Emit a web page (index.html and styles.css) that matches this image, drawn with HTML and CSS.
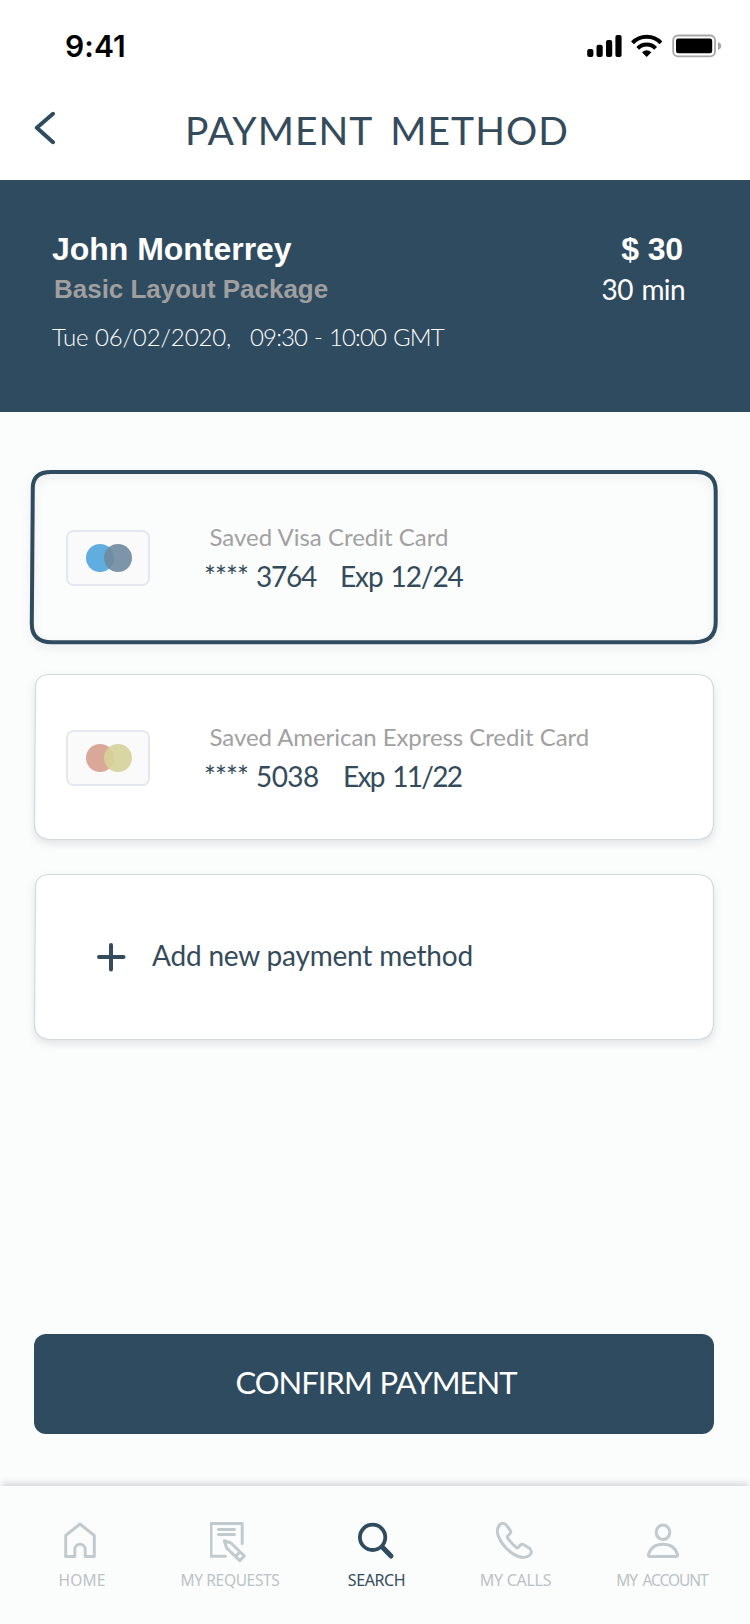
FILE: index.html
```
<!DOCTYPE html>
<html lang="en">
<head>
<meta charset="utf-8">
<title>Payment Method</title>
<link rel="stylesheet" href="styles.css">
</head>
<body>
<div class="screen">
  <div class="status">
    <span class="clock">9:41</span>
    <svg class="status-icons" width="136" height="26" viewBox="586 33 136 26">
      <rect x="587.2" y="49" width="6.2" height="8" rx="2"/>
      <rect x="596.5" y="44.7" width="6.2" height="12.3" rx="2"/>
      <rect x="606" y="40" width="6.2" height="17" rx="2"/>
      <rect x="615.4" y="35" width="6.2" height="22" rx="2"/>
      <g fill="none" stroke="#000" stroke-width="4">
        <path d="M632.5 42.8A19.6 19.6 0 0 1 660.9 42.8"/>
        <path d="M637.8 48.3A12.2 12.2 0 0 1 655.6 48.3"/>
      </g>
      <path d="M642 52.2Q646.7 48.2 651.4 52.2L646.7 56.9Z"/>
      <rect x="673.2" y="35.5" width="41.8" height="20.8" rx="4.8" fill="none" stroke="#a6a6a6" stroke-width="1.8"/>
      <rect x="676" y="38.6" width="36.2" height="14.6" rx="2.2"/>
      <path d="M718 42.2Q721.2 43 721.2 46T718 49.8Z" fill="#a6a6a6"/>
    </svg>
  </div>
  <header class="titlebar">
    <svg class="back" width="24" height="34" viewBox="33 111 24 34"><path d="M53 113.8L36.800 127.700L53 142.200"/></svg>
    <h1 class="title">PAYMENT METHOD</h1>
  </header>
  <section class="summary">
    <div>
      <div class="name">John Monterrey</div>
      <div class="package">Basic Layout Package</div>
      <div class="date"><span class="day">Tue 06/02/2020,</span><span class="hours">09:30 - 10:00 GMT</span></div>
    </div>
    <div class="cost">
      <div class="price">$ 30</div>
      <div class="length">30 min</div>
    </div>
  </section>
  <main class="methods">
    <div class="card">
      <svg class="frame selected" viewBox="0 0 680 166"><path d="M17-2H662Q681.700-2 681.700 17V148Q681.700 168.200 660 168.200H18Q-2.200 168.200-2.200 150L-1.200 14Q-1.200-2 17-2Z"/></svg>
      <svg class="chip" width="84" height="56" viewBox="0 0 84 56">
        <rect class="chip-box" x="1" y="1" width="82" height="54" rx="6.500"/>
        <circle cx="34" cy="28" r="14" fill="#60aee0"/><circle cx="52" cy="28" r="14" fill="#6f8a9f" fill-opacity=".9"/>
      </svg>
      <div class="info">
        <div class="label">Saved Visa Credit Card</div>
        <div class="number"><span class="stars">****</span><span class="digits visa">3764</span><span class="exp">Exp 12/24</span></div>
      </div>
    </div>
    <div class="card">
      <svg class="frame" viewBox="0 0 680 166"><path d="M16 .5H662Q679.500.5 679.500 16V148Q679.500 165.500 662 165.500H18Q.5 165.500.5 150L1.500 14Q1.500.5 16 .5Z"/></svg>
      <svg class="chip" width="84" height="56" viewBox="0 0 84 56">
        <rect class="chip-box" x="1" y="1" width="82" height="54" rx="6.500"/>
        <circle cx="34" cy="28" r="14" fill="#daa899"/><circle cx="52" cy="28" r="14" fill="#d6d299" fill-opacity=".9"/>
      </svg>
      <div class="info">
        <div class="label amex-label">Saved American Express Credit Card</div>
        <div class="number"><span class="stars">****</span><span class="digits amex">5038</span><span class="exp amex-exp">Exp 11/22</span></div>
      </div>
    </div>
    <div class="card add">
      <svg class="frame" viewBox="0 0 680 166"><path d="M16 .5H662Q679.500.5 679.500 16V148Q679.500 165.500 662 165.500H18Q.5 165.500.5 150L1.500 14Q1.500.5 16 .5Z"/></svg>
      <svg class="plus" width="30" height="30" viewBox="0 0 30 30"><path d="M3 15H27.500M15 3V27.500"/></svg>
      <span class="add-text">Add new payment method</span>
    </div>
  </main>
  <button class="confirm">CONFIRM PAYMENT</button>
  <nav class="tabs">
    <div class="tab">
      <svg width="40" height="48" viewBox="62 1516 40 48"><path d="M65.700 1535.500L80 1524L94.300 1535.500V1556.500H85.200V1549.500A5.200 5.200 0 0 0 74.800 1549.500V1556.500H65.700Z"/></svg>
      <span class="tab-label home">HOME</span>
    </div>
    <div class="tab">
      <svg width="40" height="48" viewBox="210.500 1516 40 48"><path d="M226 1556.300H211.500V1523.500H242.700V1543.500M219 1529.600H235M219 1534.400H235M224.800 1540.800L231.500 1543L244.800 1556L240.300 1560.600L227 1547.800ZM240.300 1552L236 1556.500"/></svg>
      <span class="tab-label requests">MY REQUESTS</span>
    </div>
    <div class="tab active">
      <svg width="40" height="48" viewBox="357 1516 40 48"><circle cx="372.600" cy="1537.300" r="12.700"/><path d="M382.500 1547.300L391 1556" stroke-width="5"/></svg>
      <span class="tab-label search">SEARCH</span>
    </div>
    <div class="tab">
      <svg width="40" height="48" viewBox="496 1516 40 48"><path d="M506 1524.800L510.300 1530.500Q511.300 1532.500 509.800 1533.800L507.500 1536Q506.800 1537 507.800 1538.300Q511.500 1543.500 516.300 1547.500Q517.500 1548.300 518.500 1547.300L520.500 1545Q522 1543.800 523.800 1544.800L529.500 1548.300Q532 1550.300 531 1553.500Q528.500 1557.400 522.500 1557.400Q514.500 1556.500 506.500 1548.500Q498 1539.500 497.300 1531.500Q497.300 1526.500 500.500 1524Q503.500 1522.300 506 1524.800Z"/></svg>
      <span class="tab-label calls">MY CALLS</span>
    </div>
    <div class="tab">
      <svg width="40" height="48" viewBox="642 1516 40 48"><ellipse cx="663" cy="1532.300" rx="6.800" ry="7.200"/><path d="M650 1556.600H676Q677.800 1556.600 677.500 1554.500C675.500 1547.800 670 1544.300 663 1544.300S650.500 1547.800 648.500 1554.500Q648.200 1556.600 650 1556.600Z"/></svg>
      <span class="tab-label account">MY ACCOUNT</span>
    </div>
  </nav>
</div>
</body>
</html>
```
FILE: styles.css
```
* { box-sizing: border-box; }
body { margin: 0; font-family: Lato, sans-serif; background: #fbfdfc; }
.screen { width: 750px; height: 1624px; display: flex; flex-direction: column; overflow: hidden; }

.status { height: 88px; padding: 26px 28px 0 65px; display: flex; justify-content: space-between; background: #fff; }
.clock { font: 600 30px/40px Inter, sans-serif; letter-spacing: 0.1px; color: #000; }
.status-icons { margin-top: 7px; }

.titlebar { height: 92px; padding: 17px 0 0 33px; display: flex; background: #fff; }
.back { margin-top: 6px; fill: none; stroke: #2f4b5f; stroke-width: 4; stroke-linecap: round; stroke-linejoin: round; }
.title { margin: 1px 0 0 128px; font-size: 39px; line-height: 48px; font-weight: 400; letter-spacing: 1.05px; word-spacing: 7px; color: #344b5b; }

.summary { height: 232px; padding: 49px 64px 0 52px; display: flex; justify-content: space-between; background: #2f4b5f; color: #fff; }
.name { font: 700 32px/40px "Liberation Sans", Arial, sans-serif; letter-spacing: -0.03px; }
.package { margin: 2px 0 14px 2px; font: 700 26px/36px "Liberation Sans", Arial, sans-serif; letter-spacing: -0.02px; color: #9f9f9f; }
.date { display: flex; font-size: 24px; line-height: 32px; font-weight: 300; }
.day { width: 198px; letter-spacing: -0.1px; }
.hours { letter-spacing: -0.85px; word-spacing: 1.2px; }
.cost { text-align: right; }
.price { padding-right: 3px; font: 700 32px/40px "Liberation Sans", Arial, sans-serif; letter-spacing: -0.16px; }
.length { margin-top: 1px; padding-right: 1px; font-size: 28px; line-height: 38px; letter-spacing: -0.6px; word-spacing: 2px; }

.methods { padding: 62px 36px 0 34px; display: flex; flex-direction: column; gap: 34px; }
.card { position: relative; height: 166px; padding-left: 32px; display: flex; }
.frame { position: absolute; inset: 0; width: 680px; height: 166px; overflow: visible; fill: #fff; stroke: #d3dadc; stroke-width: 1.2; filter: drop-shadow(0 4px 4px rgba(47, 60, 80, 0.13)); }
.frame.selected { fill: none; stroke: #2f4b5f; stroke-width: 4; filter: drop-shadow(0 4px 4px rgba(47, 60, 80, 0.11)); }
.chip, .info, .plus, .add-text { position: relative; }
.chip { margin-top: 56px; }
.chip-box { fill: #fafafb; stroke: #e4e8ee; stroke-width: 2; }
.info { margin: 48px 0 0 54px; }
.label { padding-left: 5.5px; font-size: 24px; line-height: 30px; color: #a1a1a1; }
.amex-label { letter-spacing: -0.06px; }
.number { margin-top: 6px; display: flex; font-size: 28px; line-height: 36px; color: #344b5b; }
.stars { width: 52px; letter-spacing: -0.9px; }
.digits { letter-spacing: -1.2px; }
.visa { width: 84px; }
.amex { width: 87px; letter-spacing: -0.6px; }
.exp { letter-spacing: -1.1px; word-spacing: 2px; }
.amex-exp { letter-spacing: -1.7px; word-spacing: 3px; }
.add { padding-left: 62px; }
.plus { margin-top: 68px; fill: none; stroke: #344b5b; stroke-width: 4; stroke-linecap: round; }
.add-text { margin: 63px 0 0 26px; font-size: 28px; line-height: 36px; letter-spacing: -0.19px; color: #344b5b; }

.confirm { width: 680px; height: 100px; margin: 294px 0 0 34px; padding: 0 0 4px 4px; border: 0; border-radius: 12px; background: #2f4b5f; color: #fff; font: 400 31px/96px Lato, sans-serif; letter-spacing: -1px; word-spacing: 1px; }

.tabs { height: 138px; margin-top: 52px; padding-top: 30px; display: grid; grid-template-columns: 164px 132px 161px 117px 176px; background: #fbfdfc; box-shadow: 0 -5px 6px -2px rgba(60, 65, 80, 0.2); }
.tab { display: flex; flex-direction: column; align-items: center; color: #bbc2c5; }
.tab svg { fill: none; stroke: #c3cace; stroke-width: 3; stroke-linecap: round; stroke-linejoin: round; }
.tab-label { margin-top: 6px; font: 400 16px/20px "Noto Sans", sans-serif; white-space: nowrap; }
.active { color: #344b5b; }
.active svg { stroke: #2f4b5f; stroke-width: 3.8; }
.home { font-size: 15.5px; letter-spacing: 0.2px; }
.requests { font-size: 15.5px; letter-spacing: -0.35px; }
.search { letter-spacing: -0.39px; }
.calls { letter-spacing: -0.26px; }
.account { font-size: 15.5px; letter-spacing: -1.05px; word-spacing: 2.5px; }
```
